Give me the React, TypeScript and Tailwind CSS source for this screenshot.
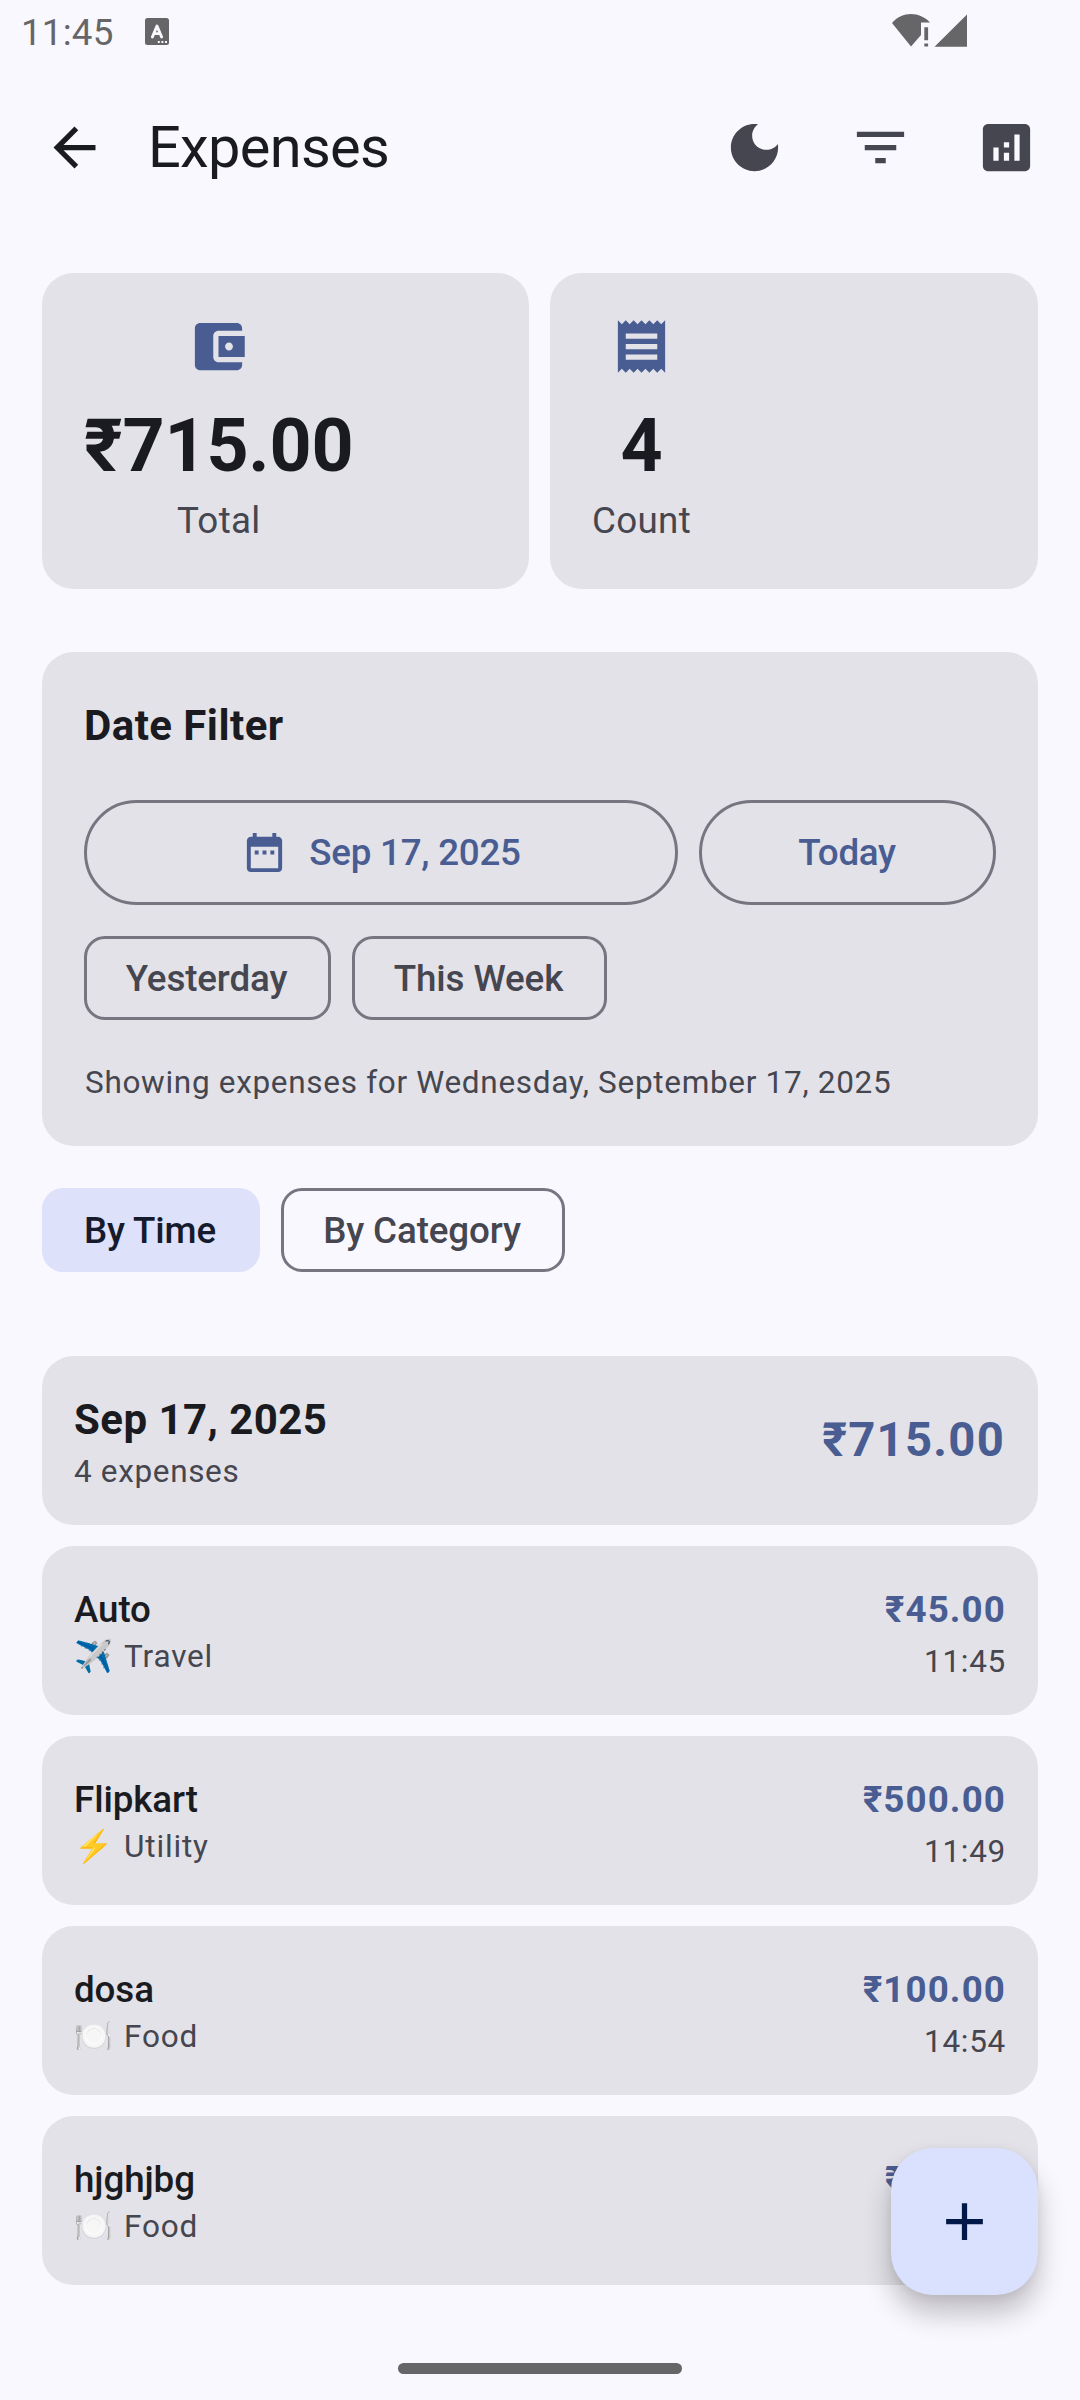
import React from "react";

type IconProps = { d: string; className?: string };

const Icon = ({ d, className = "" }: IconProps) => (
  <svg viewBox="0 0 24 24" fill="currentColor" className={`shrink-0 ${className}`}>
    <path d={d} />
  </svg>
);

const ICONS = {
  back: "M20 11H7.83l5.59-5.59L12 4l-8 8 8 8 1.41-1.41L7.83 13H20v-2z",
  moon: "M12 3c-4.97 0-9 4.03-9 9s4.03 9 9 9 9-4.03 9-9c0-.46-.04-.92-.1-1.36-.98 1.37-2.58 2.26-4.4 2.26-2.98 0-5.4-2.42-5.4-5.4 0-1.81.89-3.42 2.26-4.4C12.92 3.04 12.46 3 12 3z",
  filter: "M10 18h4v-2h-4v2zM3 6v2h18V6H3zm3 7h12v-2H6v2z",
  analytics:
    "M19 3H5c-1.1 0-2 .9-2 2v14c0 1.1.9 2 2 2h14c1.1 0 2-.9 2-2V5c0-1.1-.9-2-2-2zM9 17H7v-5h2v5zm4 0h-2v-3h2v3zm0-5h-2v-2h2v2zm4 5h-2V7h2v10z",
  wallet:
    "M21 18v1c0 1.1-.9 2-2 2H5c-1.11 0-2-.9-2-2V5c0-1.1.89-2 2-2h14c1.1 0 2 .9 2 2v1h-9c-1.11 0-2 .9-2 2v8c0 1.1.89 2 2 2h9zm-9-2h10V8H12v8zm4-2.5c-.83 0-1.5-.67-1.5-1.5s.67-1.5 1.5-1.5 1.5.67 1.5 1.5-.67 1.5-1.5 1.5z",
  receipt:
    "M18 17H6v-2h12v2zm0-4H6v-2h12v2zm0-4H6V7h12v2zM3 22l1.5-1.5L6 22l1.5-1.5L9 22l1.5-1.5L12 22l1.5-1.5L15 22l1.5-1.5L18 22l1.5-1.5L21 22V2l-1.5 1.5L18 2l-1.5 1.5L15 2l-1.5 1.5L12 2l-1.5 1.5L9 2 7.5 3.5 6 2 4.5 3.5 3 2v20z",
  calendar:
    "M9 11H7v2h2v-2zm4 0h-2v2h2v-2zm4 0h-2v2h2v-2zm2-7h-1V2h-2v2H8V2H6v2H5c-1.11 0-1.99.9-1.99 2L3 20c0 1.1.89 2 2 2h14c1.1 0 2-.9 2-2V6c0-1.1-.9-2-2-2zm0 16H5V9h14v11z",
  add: "M19 13h-6v6h-2v-6H5v-2h6V5h2v6h6v2z",
};

const StatusBar = () => (
  <div className="flex h-[63px] items-start justify-between pl-[21px] pr-[112px] text-[#666668]">
    <div className="flex items-start">
      <span className="mt-[11px] w-[124px] text-[36.75px] leading-[43px] tracking-[0.2px]">11:45</span>
      <svg viewBox="0 0 24 27" className="mt-[18px] h-[27px] w-6">
        <rect width="24" height="27" rx="2.5" fill="currentColor" />
        <path d="M7.4 19 12 8l4.6 11M9 15.6h6" fill="none" stroke="#faf8ff" strokeWidth="2.9" strokeLinecap="round" strokeLinejoin="round" />
        <path d="M12.8 23h2v2h-2zM16.4 23h2v2h-2zM20 23h2v2h-2z" fill="#faf8ff" />
      </svg>
    </div>
    <svg viewBox="0 0 76 34" fill="currentColor" className="mt-3.5 h-[34px] w-[76px]">
      <path d="M19 32.5 0 9C5 3 12 0 19 0s14 3 19 8.5h-9V21z" />
      <path d="M32.3 13.3h3.8v13h-3.8zM32.3 29.5h3.8v3h-3.8zM42.5 32.7 75 .5v32.2z" />
    </svg>
  </div>
);

const TopBar = () => (
  <header className="flex h-[168px] items-center pl-[43px] pr-[42px] text-[#45464f]">
    <Icon d={ICONS.back} className="size-[63px] text-[#1a1b21]" />
    <h1 className="ml-[42px] flex-1 text-[57.75px] leading-[74px] tracking-[-0.7px] text-[#1a1b21]">Expenses</h1>
    <div className="flex gap-[63px]">
      <Icon d={ICONS.moon} className="size-[63px]" />
      <Icon d={ICONS.filter} className="size-[63px]" />
      <Icon d={ICONS.analytics} className="size-[63px]" />
    </div>
  </header>
);

const SummaryCard = ({ icon, value, label }: { icon: string; value: string; label: string }) => (
  <div className="flex h-[316px] items-start rounded-[31.5px] bg-[#e3e2e8] p-[42px]">
    <div className="flex flex-col items-center">
      <Icon d={icon} className="size-[63px] text-[#495d92]" />
      <div className="mt-[21px] text-[73.5px] leading-[94.5px] font-bold tracking-[-0.2px] text-[#1a1b21]">{value}</div>
      <div className="mt-px text-[36.75px] leading-[52.5px] tracking-[0.3px] text-[#45464f]">{label}</div>
    </div>
  </div>
);

const Chip = ({ label, selected = false, width }: { label: string; selected?: boolean; width: string }) => (
  <button
    className={`flex h-[84px] items-center justify-center rounded-[21px] pt-0.5 pr-0.5 text-[36.75px] font-medium tracking-[-0.13px] whitespace-nowrap ${width} ${
      selected ? "bg-[#dde1f9] text-[#151b2c]" : "border-[3px] border-[#757680] text-[#45464f]"
    }`}
  >
    {label}
  </button>
);

const DateFilter = () => (
  <section className="mt-[63px] h-[494px] rounded-[31.5px] bg-[#e3e2e8] p-[42px]">
    <h2 className="text-[42px] leading-[63px] font-bold tracking-[0.45px] text-[#1a1b21]">Date Filter</h2>
    <div className="mt-[43px] flex gap-[21px] text-[36.75px] font-medium tracking-[-0.25px] text-[#495d92]">
      <button className="flex h-[105px] w-[594px] items-center justify-center gap-[21px] rounded-full border-[3px] border-[#757680]">
        <Icon d={ICONS.calendar} className="size-[47px]" />
        Sep 17, 2025
      </button>
      <button className="h-[105px] flex-1 rounded-full border-[3px] border-[#757680] pr-px">Today</button>
    </div>
    <div className="mt-[31px] flex gap-[21px]">
      <Chip label="Yesterday" width="w-[247px]" />
      <Chip label="This Week" width="w-[255px]" />
    </div>
    <p className="mt-[42px] pl-px text-[31.5px] leading-[42px] tracking-[0.69px] text-[#45464f]">
      Showing expenses for Wednesday, September 17, 2025
    </p>
  </section>
);

type Expense = { name: string; emoji: string; category: string; amount: string; time: string };

const EXPENSES: Expense[] = [
  { name: "Auto", emoji: "✈️", category: "Travel", amount: "₹45.00", time: "11:45" },
  { name: "Flipkart", emoji: "⚡", category: "Utility", amount: "₹500.00", time: "11:49" },
  { name: "dosa", emoji: "🍽️", category: "Food", amount: "₹100.00", time: "14:54" },
  { name: "hjghjbg", emoji: "🍽️", category: "Food", amount: "₹70.00", time: "14:55" },
];

const ExpenseRow = ({ name, emoji, category, amount, time }: Expense) => (
  <li className="flex h-[169px] items-center justify-between rounded-[31.5px] bg-[#e3e2e8] px-8">
    <div>
      <div className="mt-px -mb-px text-[36.75px] leading-[52.5px] font-medium tracking-[-0.1px] text-[#1a1b21]">{name}</div>
      <div className="flex h-[42px] text-[31.5px] leading-[42px] tracking-[0.85px] text-[#45464f]">
        <span className="w-[50px] font-['Noto_Color_Emoji']">{emoji}</span>
        {category}
      </div>
    </div>
    <div className="text-right">
      <div className="text-[36.75px] leading-[63px] font-bold tracking-[1.1px] text-[#495d92]">{amount}</div>
      <div className="text-[31.5px] leading-[42px] tracking-[0.7px] text-[#45464f]">{time}</div>
    </div>
  </li>
);

export default function App() {
  return (
    <div className="relative h-[2400px] w-[1080px] overflow-hidden bg-[#faf8ff] font-[Roboto,sans-serif]">
      <StatusBar />
      <TopBar />
      <main className="px-[42px] pt-[42px]">
        <div className="grid grid-cols-[487px_488px] gap-[21px]">
          <SummaryCard icon={ICONS.wallet} value="₹715.00" label="Total" />
          <SummaryCard icon={ICONS.receipt} value="4" label="Count" />
        </div>
        <DateFilter />
        <div className="mt-[42px] flex gap-[21px]">
          <Chip label="By Time" selected width="w-[218px]" />
          <Chip label="By Category" width="w-[284px]" />
        </div>
        <ul className="mt-[84px] flex flex-col gap-[21px]">
          <li className="flex h-[169px] items-center justify-between rounded-[31.5px] bg-[#e3e2e8] px-8">
            <div>
              <div className="text-[42px] leading-[63px] font-bold tracking-[0.45px] text-[#1a1b21]">Sep 17, 2025</div>
              <div className="text-[31.5px] leading-[42px] tracking-[0.65px] text-[#45464f]">4 expenses</div>
            </div>
            <div className="mr-px text-[47.25px] leading-[63px] font-bold tracking-[1.25px] text-[#495d92]">₹715.00</div>
          </li>
          {EXPENSES.map((expense, i) => (
            <ExpenseRow key={i} {...expense} />
          ))}
        </ul>
      </main>
      <button className="absolute right-[42px] bottom-[105px] flex size-[147px] items-center justify-center rounded-[42px] bg-[#dae1ff] text-[#001847] shadow-[0_18px_28px_rgba(0,0,0,0.24),0_2px_10px_rgba(0,0,0,0.06)]">
        <Icon d={ICONS.add} className="size-[63px]" />
      </button>
      <div className="absolute bottom-[26.5px] left-[398px] h-[10.5px] w-[284px] rounded-full bg-[#666668]" />
    </div>
  );
}
